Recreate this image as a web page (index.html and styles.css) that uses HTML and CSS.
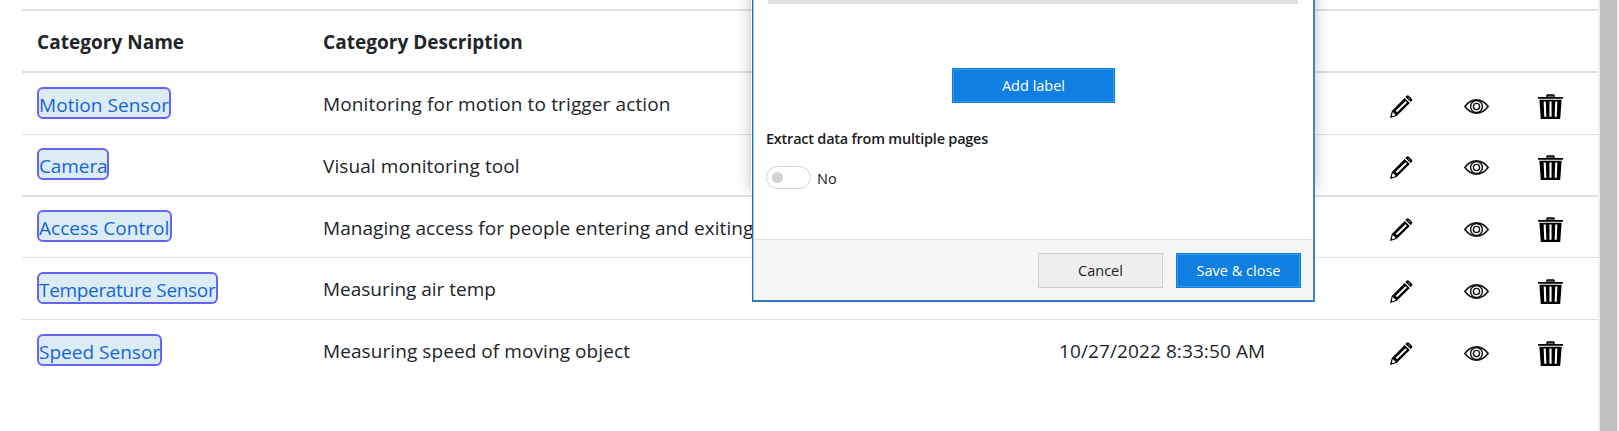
FILE: index.html
```html
<!DOCTYPE html>
<html lang="en">
<head>
<meta charset="utf-8">
<title>Categories</title>
<link rel="stylesheet" href="styles.css">
</head>
<body>
<svg class="sprite" aria-hidden="true">
  <symbol id="pencil" viewBox="0 0 23 23">
    <path d="M16.5 .9Q17.6-.3 18.8 .7L21.9 3.8Q22.8 4.9 21.8 5.9L20.6 7.1L15.3 2.1Z"/>
    <path d="M14.6 2.9L19.8 8.1L6.6 21.1L0 23L1.8 16Z"/>
    <path d="M15.5 6.2L5.7 15.8L7.1 17.2L17 7.6Z" fill="#fff"/>
    <path d="M2.8 17.1L5.8 20.1L2.7 21.2L1.8 20.3Z" fill="#fff"/>
    <path d="M18.2 2.7L20 4.3" stroke="#fff" stroke-width=".7"/>
  </symbol>
  <symbol id="eye" viewBox="0 0 25 15">
    <path d="M.9 7.5Q5.8.9 12.5.9T24.1 7.5Q19.2 14.1 12.5 14.1T.9 7.5Z" fill="none" stroke="#111" stroke-width="1.6"/>
    <circle cx="12.5" cy="7.5" r="5.9" fill="none" stroke="#111" stroke-width="1.4"/>
    <circle cx="12.5" cy="7.5" r="3.1" fill="none" stroke="#111" stroke-width="1.4"/>
  </symbol>
  <symbol id="trash" viewBox="0 0 25 25">
    <path d="M8.3 3V1.5Q8.3.2 9.6.2H15.4Q16.7.2 16.7 1.5V3H25V4.7H0V3Z"/>
    <path d="M9.6 2.9V1.7H15.4V2.9Z" fill="#777"/>
    <path d="M1.4 5.7H23.6L22.2 25H2.8Z"/>
    <path d="M6.7 7.5L7.3 22.8M12.5 7.5V22.8M18.3 7.5L17.7 22.8" stroke="#fff" stroke-width="2.1" fill="none"/>
  </symbol>
</svg>
<div class="page">
  <main class="table">
    <div class="row head"><span class="heading">Category Name</span><span class="heading">Category Description</span></div>
    <div class="row strong r1"><span><a class="chip motion">Motion Sensor</a></span><span class="desc d1">Monitoring for motion to trigger action</span><span></span><svg class="pencil"><use href="#pencil"/></svg><svg class="eye"><use href="#eye"/></svg><svg class="trash"><use href="#trash"/></svg></div>
    <div class="row r2"><span><a class="chip camera">Camera</a></span><span class="desc d2">Visual monitoring tool</span><span></span><svg class="pencil"><use href="#pencil"/></svg><svg class="eye"><use href="#eye"/></svg><svg class="trash"><use href="#trash"/></svg></div>
    <div class="row strong r3"><span><a class="chip access">Access Control</a></span><span class="desc d3">Managing access for people entering and exiting</span><span></span><svg class="pencil"><use href="#pencil"/></svg><svg class="eye"><use href="#eye"/></svg><svg class="trash"><use href="#trash"/></svg></div>
    <div class="row r4"><span><a class="chip temperature">Temperature Sensor</a></span><span class="desc d4">Measuring air temp</span><span></span><svg class="pencil"><use href="#pencil"/></svg><svg class="eye"><use href="#eye"/></svg><svg class="trash"><use href="#trash"/></svg></div>
    <div class="row r5"><span><a class="chip speed">Speed Sensor</a></span><span class="desc d5">Measuring speed of moving object</span><span class="desc date">10/27/2022 8:33:50 AM</span><svg class="pencil"><use href="#pencil"/></svg><svg class="eye"><use href="#eye"/></svg><svg class="trash"><use href="#trash"/></svg></div>
  </main>
  <div class="scrollbar"></div>
</div>
<div class="shadow-layer"></div>
<section class="dialog">
  <div class="dialog-body">
    <div class="progress"></div>
    <button class="btn primary add">Add label</button>
    <div class="question">Extract data from multiple pages</div>
    <div class="toggle-line"><span class="toggle"><span class="knob"></span></span><span class="no">No</span></div>
  </div>
  <footer class="dialog-footer">
    <button class="btn cancel">Cancel</button>
    <button class="btn primary save">Save &amp; close</button>
  </footer>
</section>
</body>
</html>
```
FILE: styles.css
```css
* { box-sizing: border-box; }
body {
  margin: 0;
  height: 431px;
  overflow: hidden;
  position: relative;
  background: #fff;
  color: #212529;
  font-family: "Open Sans", "Noto Sans", sans-serif;
}
.sprite { position: absolute; width: 0; height: 0; }
.page { display: flex; height: 431px; padding-left: 22px; }
.table { width: 1576px; padding-top: 9px; }
.scrollbar {
  width: 21px;
  background: #c1c1c1;
  border-left: 2px solid #f0f0f0;
  border-right: 2px solid #f0f0f0;
}
.row {
  display: grid;
  grid-template-columns: 286px 737px 330px 74px 74px 25px;
  align-items: start;
  padding: 14px 0 0 15px;
  border-top: 1px solid #dcdfe3;
  white-space: nowrap;
}
.strong, .head { border-top: 2px solid #dee2e6; }
.head { height: 62px; padding-top: 16px; }
.r1 { height: 63px; }
.r2 { height: 61px; padding-top: 13px; }
.r3 { height: 62px; padding-top: 13px; }
.r4, .r5 { height: 62px; }
.heading { font-weight: 700; font-size: 19px; line-height: 30px; letter-spacing: .03px; }
.desc { font-size: 19px; line-height: 32px; padding-top: 1px; }
.r2 .desc, .r3 .desc { padding-top: 2px; }
.d1 { letter-spacing: .13px; }
.d2 { letter-spacing: .09px; }
.d3 { letter-spacing: .06px; }
.d4 { letter-spacing: -.02px; }
.d5 { letter-spacing: .08px; }
.date { margin-left: -1px; letter-spacing: .1px; }
.chip {
  display: block;
  height: 32px;
  border: 2px solid #6464fa;
  border-radius: 6px;
  background: #dcecf4;
  color: #1665d8;
  font-size: 19px;
  line-height: 33px;
}
.motion { width: 134px; letter-spacing: .07px; }
.camera { width: 72px; letter-spacing: -.1px; }
.access { width: 135px; letter-spacing: .04px; }
.temperature { width: 181px; letter-spacing: -.32px; }
.speed { width: 125px; letter-spacing: .02px; }
.pencil { width: 23px; height: 23px; margin-top: 8px; }
.eye { width: 25px; height: 15px; margin-top: 12px; }
.trash { width: 25px; height: 25px; margin-top: 7px; }

.shadow-layer {
  position: absolute;
  left: 751px;
  top: -40px;
  width: 564px;
  height: 230px;
  box-shadow: 0 0 14px rgba(0, 0, 0, .25);
}
.dialog {
  position: absolute;
  left: 752px;
  top: 0;
  width: 563px;
  height: 302px;
  border: 2px solid #4683c1;
  border-top: 0;
  border-left: 1px solid #1470cc;
  border-bottom-color: #367bbd;
  background: #fff;
  box-shadow: inset 1px 0 #a9cdef;
  color: #1b1b1b;
  font-size: 14.5px;
}
.dialog-body { height: 239px; padding-left: 13px; }
.progress { width: 530px; height: 4px; margin-left: 2px; background: #e0e0e0; }
.btn {
  display: block;
  height: 35px;
  padding: 0;
  border: 1px solid #0f7fe0;
  font: 14.5px/31px "Open Sans", "Noto Sans", sans-serif;
  text-align: center;
}
.primary { background: #107fe2; color: #fff; box-shadow: inset 0 0 0 1px #3b98e9; }
.add { width: 163px; margin: 64px 0 0 186px; }
.question { margin-top: 26px; line-height: 20px; font-weight: 600; letter-spacing: -.23px; white-space: nowrap; }
.toggle-line { display: flex; margin-top: 17px; gap: 6px; }
.toggle { width: 45px; height: 23px; border: 1px solid #d2d2d2; border-radius: 12px; padding: 5px; }
.knob { display: block; width: 11px; height: 11px; border-radius: 50%; background: #d2d2d2; }
.no { line-height: 26px; }
.dialog-footer {
  height: 61px;
  margin-left: 1px;
  padding: 13px 12px 0 0;
  display: flex;
  justify-content: flex-end;
  gap: 13px;
  background: #f4f6f6;
  border-top: 1px solid #e3e3e5;
}
.cancel { width: 125px; background: #eeeef0; border-color: #cdced0; color: #222; }
.save { width: 125px; }
```
